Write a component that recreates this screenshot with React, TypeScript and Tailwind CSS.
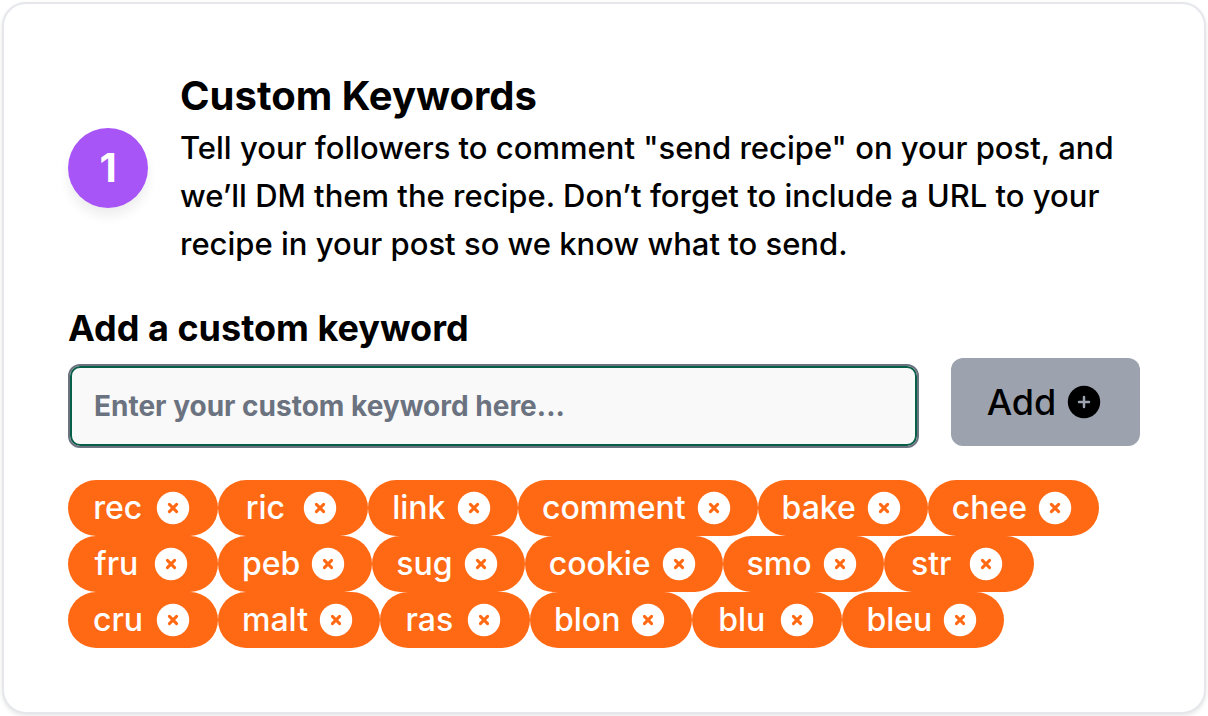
import { useState, type FormEvent } from 'react';

const INITIAL_KEYWORDS = [
  'rec', 'ric', 'link', 'comment', 'bake', 'chee',
  'fru', 'peb', 'sug', 'cookie', 'smo', 'str',
  'cru', 'malt', 'ras', 'blon', 'blu', 'bleu',
];

function PlusCircle() {
  return (
    <svg viewBox="0 0 40 40" className="size-10 shrink-0" fill="none" aria-hidden="true">
      <circle cx="20" cy="20" r="16.2" fill="currentColor" />
      <path d="M20 15v10M15 20h10" stroke="#9ca3af" strokeWidth="2.5" strokeLinecap="round" />
    </svg>
  );
}

function RemoveCircle() {
  return (
    <svg viewBox="0 0 40 40" className="size-10" fill="none" aria-hidden="true">
      <circle cx="20" cy="20" r="16.2" fill="#fff" />
      <path d="M16.4 16.4l7.2 7.2M23.6 16.4l-7.2 7.2" stroke="#ff6914" strokeWidth="3" strokeLinecap="round" />
    </svg>
  );
}

interface KeywordPillProps {
  keyword: string;
  onRemove: (keyword: string) => void;
}

function KeywordPill({ keyword, onRemove }: KeywordPillProps) {
  return (
    <li className="flex h-14 min-w-[150px] items-center justify-around gap-2 rounded-full bg-[#ff6914] px-6 text-[32px] leading-[48px] font-medium text-white">
      <span>{keyword}</span>
      <button type="button" aria-label={`Remove ${keyword}`} onClick={() => onRemove(keyword)}>
        <RemoveCircle />
      </button>
    </li>
  );
}

export default function App() {
  const [keywords, setKeywords] = useState(INITIAL_KEYWORDS);
  const [value, setValue] = useState('');

  const handleAdd = (e: FormEvent) => {
    e.preventDefault();
    const next = value.trim();
    if (!next || keywords.includes(next)) return;
    setKeywords([...keywords, next]);
    setValue('');
  };

  const handleRemove = (keyword: string) => {
    setKeywords(keywords.filter(k => k !== keyword));
  };

  return (
    <div className="bg-white p-[2px] font-['Inter','Liberation_Sans',sans-serif] text-black">
      <section className="rounded-[24px] border-2 border-[#e5e7eb] bg-white p-16 shadow-[0_2px_4px_rgba(0,0,0,0.1)]">
        <div className="flex items-center gap-8">
          <div className="flex size-20 shrink-0 items-center justify-center rounded-full bg-[#a855f7] text-[40px] font-bold text-white shadow-[0_8px_12px_rgba(0,0,0,0.07)]">
            1
          </div>
          <div>
            <h2 className="text-[40px] leading-[56px] font-bold">Custom Keywords</h2>
            <p className="text-[31px] leading-[48px] font-medium">
              Tell your followers to comment "send recipe" on your post, and we’ll DM them the recipe.
              Don’t forget to include a URL to your recipe in your post so we know what to send.
            </p>
          </div>
        </div>

        <form className="mt-8 flex items-end gap-8" onSubmit={handleAdd}>
          <div className="flex-1">
            <label htmlFor="keyword" className="block text-[36px] leading-[56px] font-bold">
              Add a custom keyword
            </label>
            <input
              id="keyword"
              type="text"
              value={value}
              onChange={e => setValue(e.target.value)}
              placeholder="Enter your custom keyword here..."
              className="mt-2 block h-[84px] w-full rounded-xl border-2 border-[#6b7280] bg-[#f9f9f9] px-6 text-[28px] font-bold outline-none inset-ring-2 inset-ring-[#065f46] placeholder:text-[#6b7280]"
            />
          </div>
          <button
            type="submit"
            className="mb-[2px] flex h-[88px] w-[189px] items-center justify-center gap-2 rounded-xl bg-[#9ca3af] text-[36px] font-medium"
          >
            Add
            <PlusCircle />
          </button>
        </form>

        <ul className="mt-8 flex flex-wrap">
          {keywords.map(keyword => (
            <KeywordPill key={keyword} keyword={keyword} onRemove={handleRemove} />
          ))}
        </ul>
      </section>
    </div>
  );
}
